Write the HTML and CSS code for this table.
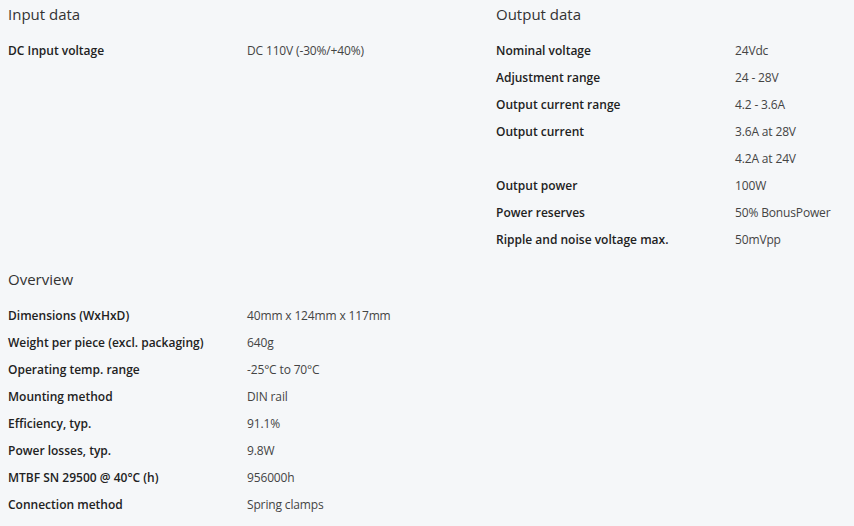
FILE: index.html
```html
<!DOCTYPE html>
<html>
<head>
<meta charset="utf-8">
<link rel="stylesheet" href="styles.css">
</head>
<body>
<div class="specs">
  <section class="group">
    <h2 class="group-title">Input data</h2>
    <dl class="rows">
      <div class="row"><dt>DC Input voltage</dt><dd>DC 110V (-30%/+40%)</dd></div>
    </dl>
  </section>
  <section class="group">
    <h2 class="group-title">Output data</h2>
    <dl class="rows">
      <div class="row"><dt>Nominal voltage</dt><dd>24Vdc</dd></div>
      <div class="row"><dt>Adjustment range</dt><dd>24 - 28V</dd></div>
      <div class="row"><dt>Output current range</dt><dd>4.2 - 3.6A</dd></div>
      <div class="row"><dt>Output current</dt><dd>3.6A at 28V</dd></div>
      <div class="row"><dt></dt><dd>4.2A at 24V</dd></div>
      <div class="row"><dt>Output power</dt><dd>100W</dd></div>
      <div class="row"><dt>Power reserves</dt><dd>50% BonusPower</dd></div>
      <div class="row"><dt>Ripple and noise voltage max.</dt><dd>50mVpp</dd></div>
    </dl>
  </section>
  <section class="group">
    <h2 class="group-title">Overview</h2>
    <dl class="rows">
      <div class="row"><dt>Dimensions (WxHxD)</dt><dd>40mm x 124mm x 117mm</dd></div>
      <div class="row"><dt>Weight per piece (excl. packaging)</dt><dd>640g</dd></div>
      <div class="row"><dt>Operating temp. range</dt><dd>-25°C to 70°C</dd></div>
      <div class="row"><dt>Mounting method</dt><dd>DIN rail</dd></div>
      <div class="row"><dt>Efficiency, typ.</dt><dd>91.1%</dd></div>
      <div class="row"><dt>Power losses, typ.</dt><dd>9.8W</dd></div>
      <div class="row"><dt>MTBF SN 29500 @ 40°C (h)</dt><dd>956000h</dd></div>
      <div class="row"><dt>Connection method</dt><dd>Spring clamps</dd></div>
    </dl>
  </section>
</div>
</body>
</html>
```

FILE: styles.css
```css
html, body {
  margin: 0;
  background: #f5f7f9;
}
body {
  padding: 4px 8px 0;
  font-family: "Open Sans", "Liberation Sans", sans-serif;
  color: #333;
  overflow: hidden;
}
.specs {
  display: grid;
  grid-template-columns: 488px minmax(0, 1fr);
  align-items: start;
}
.group {
  margin-bottom: 15.5px;
}
.group-title {
  margin: 0 0 13px;
  font-size: 15px;
  font-weight: 400;
  line-height: 20px;
  color: #333;
}
.rows {
  margin: 0;
}
.row {
  display: flex;
  height: 27px;
  line-height: 27px;
  font-size: 12px;
}
.row dt {
  width: 239px;
  flex: none;
  font-weight: 600;
  color: #222;
}
.row dd {
  margin: 0;
  color: #444;
  letter-spacing: -0.15px;
  white-space: nowrap;
}
```
